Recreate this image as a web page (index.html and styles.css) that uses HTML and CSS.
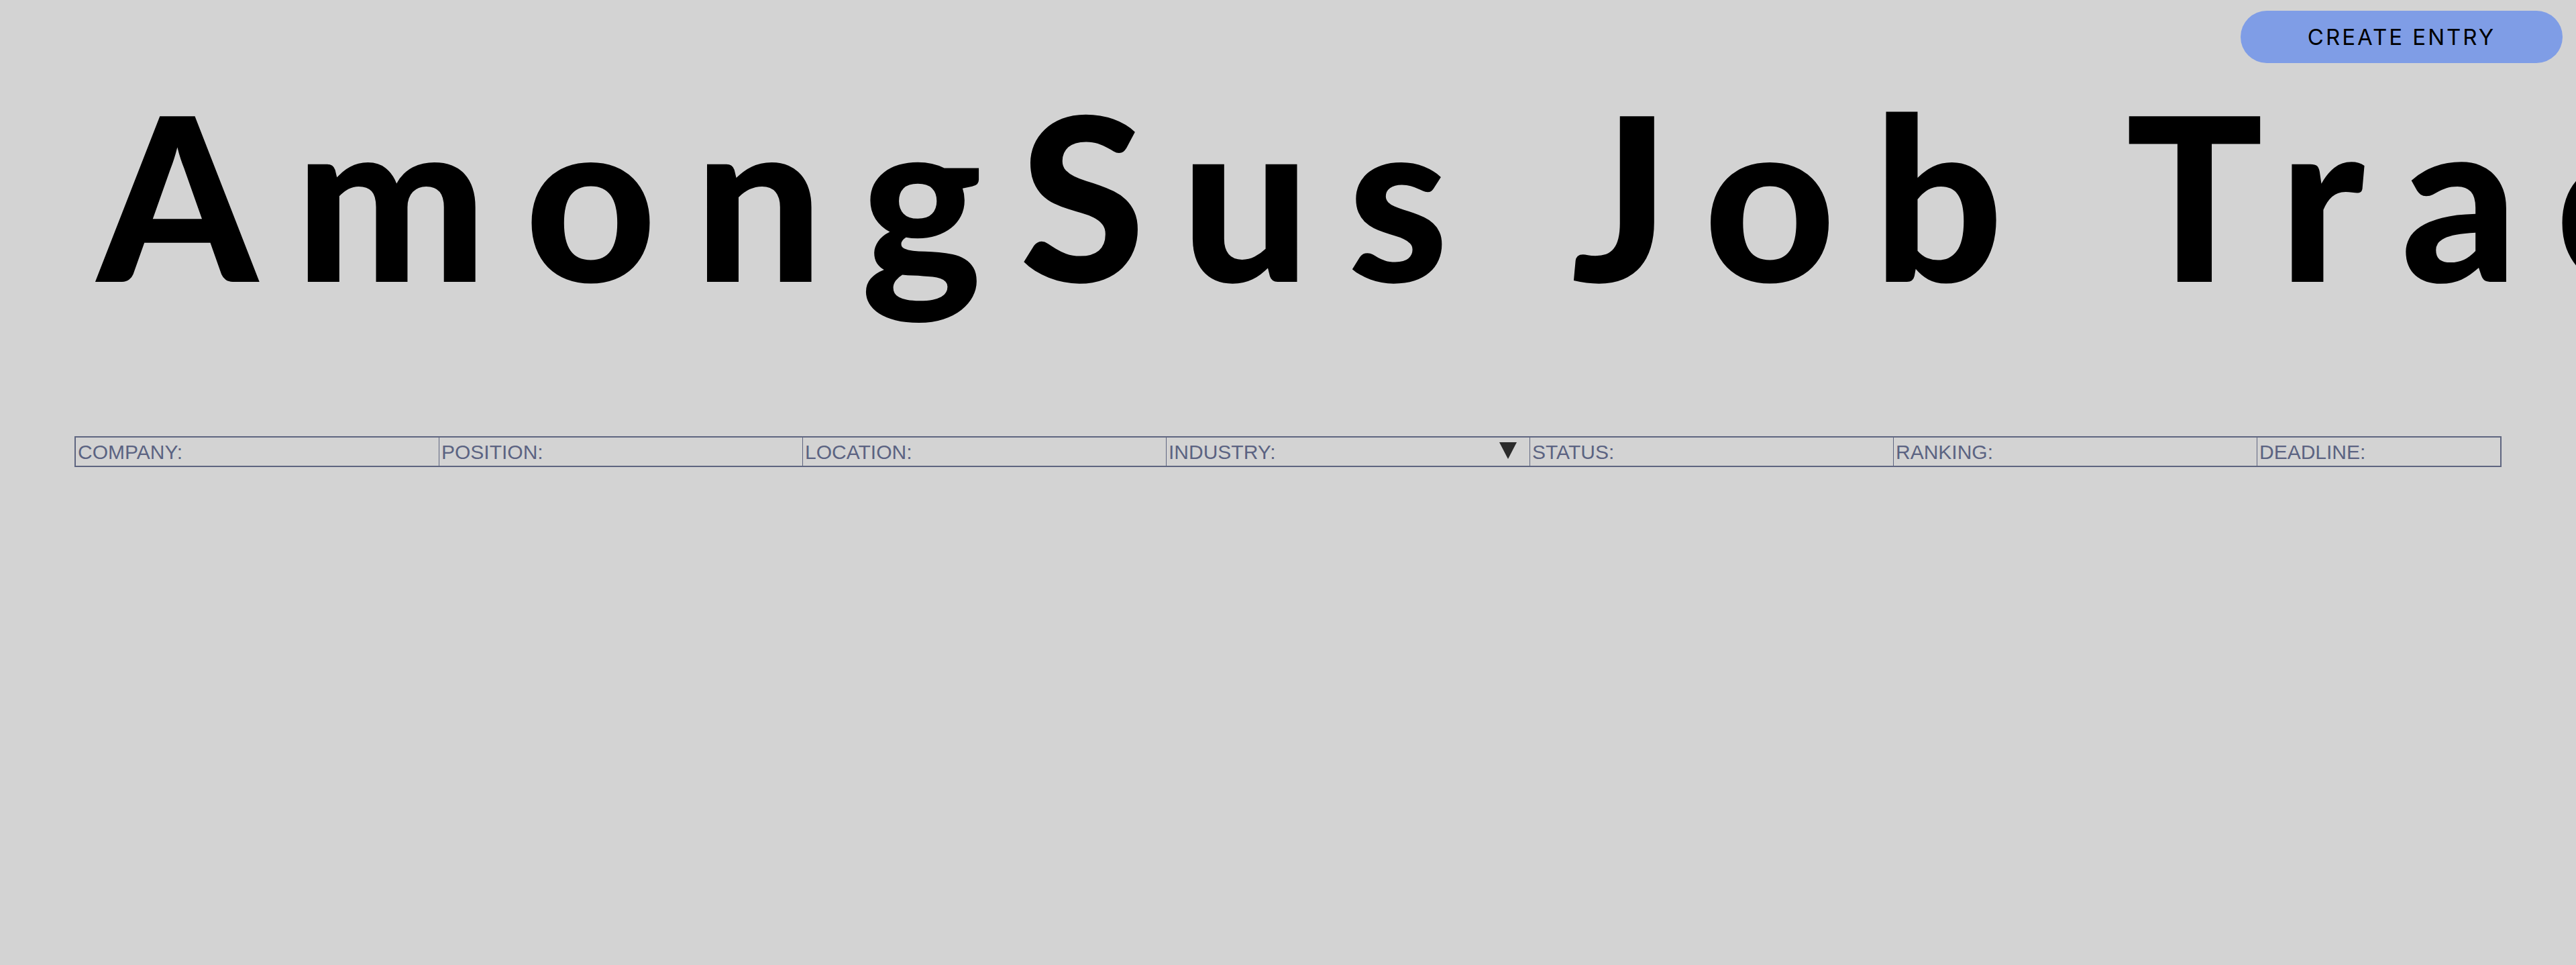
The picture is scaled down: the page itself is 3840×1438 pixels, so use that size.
FILE: index.html
```html
<!DOCTYPE html>
<html lang="en">
<head>
<meta charset="utf-8">
<title>AmongSus Job Tracker</title>
<link rel="stylesheet" href="styles.css">
</head>
<body>
  <header class="topbar">
    <button class="create-btn" type="button">CREATE ENTRY</button>
  </header>
  <h1 class="title">AmongSus Job Tracker</h1>
  <div class="table">
    <div class="cell">COMPANY:</div>
    <div class="cell">POSITION:</div>
    <div class="cell">LOCATION:</div>
    <div class="cell cell-select">
      <span>INDUSTRY:</span>
      <svg class="arrow" width="26" height="25" viewBox="0 0 26 25"><polygon points="0,0 26,0 13,25" fill="#2b2b2b"/></svg>
    </div>
    <div class="cell">STATUS:</div>
    <div class="cell">RANKING:</div>
    <div class="cell last">DEADLINE:</div>
  </div>
</body>
</html>
```

FILE: styles.css
```css
html, body {
  margin: 0;
  padding: 0;
  overflow: hidden;
}
body {
  background: #d3d3d3;
  width: 3840px;
  height: 1438px;
}
.topbar {
  display: flex;
  justify-content: flex-end;
  padding: 16px 20px 0 0;
}
.create-btn {
  width: 480px;
  height: 78px;
  border: none;
  border-radius: 39px;
  background: #7f9de6;
  color: #000;
  font-family: "Inter", "Liberation Sans", sans-serif;
  font-size: 33px;
  letter-spacing: 3px;
  padding: 0;
  cursor: pointer;
}
.title {
  margin: 26px 0 0 0;
  padding-left: 145px;
  font-family: "Lato", "DejaVu Sans", sans-serif;
  font-weight: 900;
  font-size: 340px;
  line-height: 337px;
  letter-spacing: 56px;
  white-space: nowrap;
  color: #000;
}
.table {
  margin: 193px 0 0 111px;
  width: 3618px;
  box-sizing: border-box;
  border: 2px solid #5e6580;
  display: grid;
  grid-template-columns: repeat(6, 542px) 1fr;
}
.cell {
  font-family: "Liberation Sans", Arial, sans-serif;
  font-size: 30px;
  line-height: 40px;
  height: 42px;
  box-sizing: border-box;
  padding: 2px 0 0 3px;
  color: #5b6382;
  border-right: 1px solid #5e6580;
}
.cell.last {
  border-right: none;
}
.cell-select {
  display: flex;
  justify-content: space-between;
  align-items: flex-start;
  padding-right: 19px;
}
.arrow {
  margin-top: 5px;
}
```
